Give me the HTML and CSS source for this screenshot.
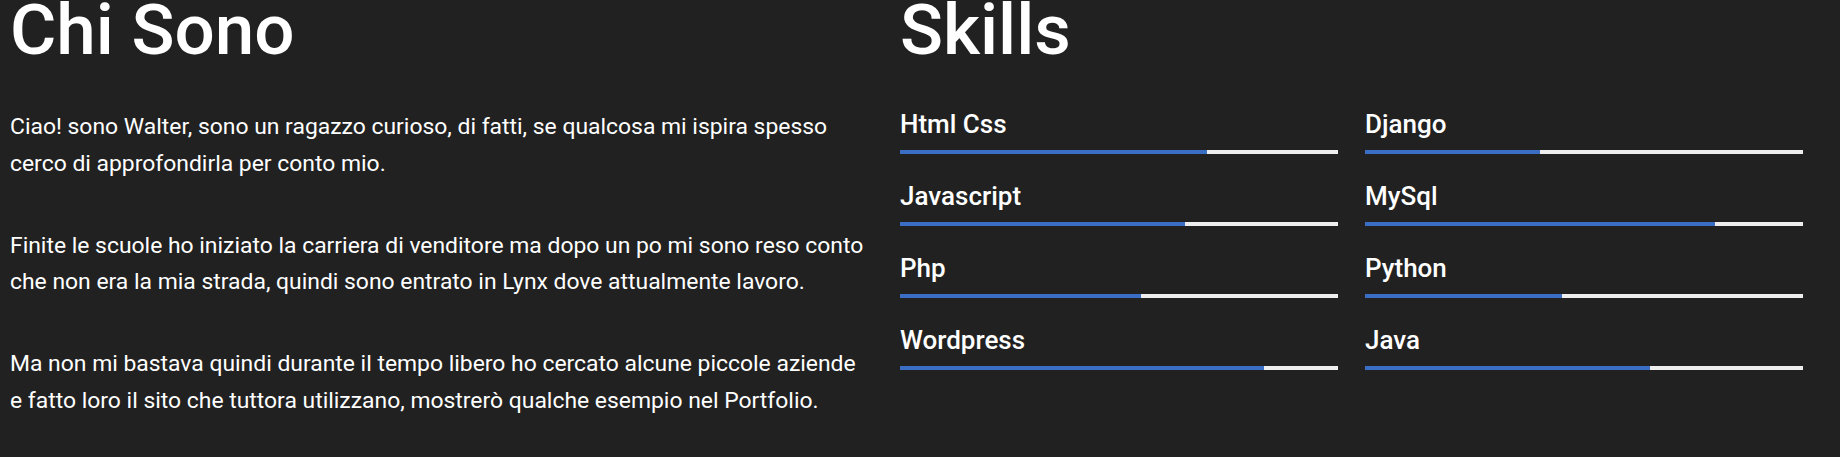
FILE: index.html
```html
<!DOCTYPE html>
<html lang="it">
<head>
<meta charset="utf-8">
<title>Chi Sono</title>
<link rel="stylesheet" href="styles.css">
</head>
<body>
<main class="about">
  <section class="bio">
    <h1 class="title">Chi Sono</h1>
    <p class="text">Ciao! sono Walter, sono un ragazzo curioso, di fatti, se qualcosa mi ispira spesso cerco di approfondirla per conto mio.</p>
    <p class="text">Finite le scuole ho iniziato la carriera di venditore ma dopo un po mi sono reso conto che non era la mia strada, quindi sono entrato in Lynx dove attualmente lavoro.</p>
    <p class="text">Ma non mi bastava quindi durante il tempo libero ho cercato alcune piccole aziende e fatto loro il sito che tuttora utilizzano, mostrerò qualche esempio nel Portfolio.</p>
  </section>
  <section class="skills">
    <h1 class="title">Skills</h1>
    <div class="skill-grid">
      <div class="skill"><div class="skill-name">Html Css</div><div class="bar"><div class="fill" style="width:70%"></div></div></div>
      <div class="skill"><div class="skill-name">Django</div><div class="bar"><div class="fill" style="width:40%"></div></div></div>
      <div class="skill"><div class="skill-name">Javascript</div><div class="bar"><div class="fill" style="width:65%"></div></div></div>
      <div class="skill"><div class="skill-name">MySql</div><div class="bar"><div class="fill" style="width:80%"></div></div></div>
      <div class="skill"><div class="skill-name">Php</div><div class="bar"><div class="fill" style="width:55%"></div></div></div>
      <div class="skill"><div class="skill-name">Python</div><div class="bar"><div class="fill" style="width:45%"></div></div></div>
      <div class="skill"><div class="skill-name">Wordpress</div><div class="bar"><div class="fill" style="width:83%"></div></div></div>
      <div class="skill"><div class="skill-name">Java</div><div class="bar"><div class="fill" style="width:65%"></div></div></div>
    </div>
  </section>
</main>
</body>
</html>
```

FILE: styles.css
```css
html, body {
  margin: 0;
  padding: 0;
  background: #212121;
  color: #ffffff;
  font-family: Roboto, "Liberation Sans", Arial, sans-serif;
}

.about {
  display: flex;
  padding: 0 10px;
  height: 457px;
  box-sizing: border-box;
}

.bio {
  width: 858px;
  margin-right: 32px;
  flex: none;
}

.skills {
  flex: 1;
}

.title {
  margin: 0;
  font-size: 71px;
  font-weight: 500;
  line-height: 60px;
}

.text {
  margin: 0 0 45.5px;
  font-size: 22.9px;
  line-height: 36.5px;
}

.bio .title {
  margin-bottom: 49px;
}

.skill-grid {
  margin-top: 49px;
  display: grid;
  grid-template-columns: 438px 438px;
  column-gap: 27px;
  row-gap: 27px;
}

.skill-name {
  font-size: 26px;
  font-weight: 500;
  line-height: 30px;
  margin-bottom: 11px;
}

.bar {
  height: 4px;
  background: #eeeeee;
}

.fill {
  height: 100%;
  background: #3a6ec4;
}
```
